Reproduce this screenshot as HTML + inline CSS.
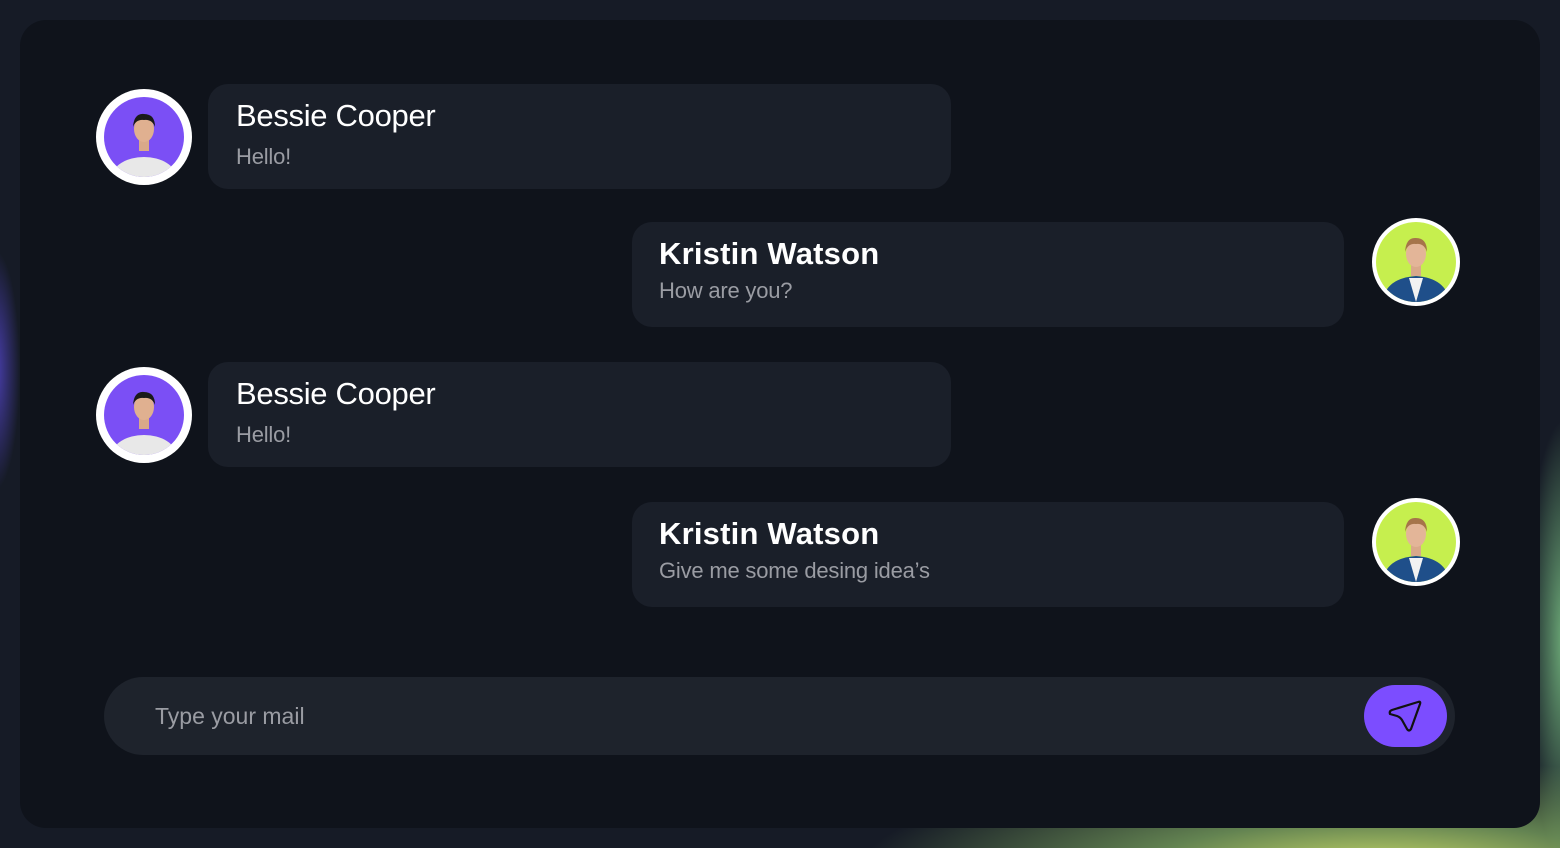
<!DOCTYPE html>
<html><head><style>
*{margin:0;padding:0;box-sizing:border-box}
body{width:1560px;height:848px;overflow:hidden;font-family:"Liberation Sans",sans-serif;position:relative;
background:radial-gradient(ellipse 520px 110px at 1380px 870px,#cbdc68 0%,rgba(150,200,110,.6) 45%,rgba(22,27,38,0) 100%),
radial-gradient(ellipse 40px 220px at 1565px 640px,#6fae7a,rgba(22,27,38,0)),
radial-gradient(ellipse 25px 120px at -5px 370px,#4a3fb0,rgba(22,27,38,0)),#161b26}
.card{position:absolute;left:20px;top:20px;width:1520px;height:808px;background:#0f131b;border-radius:26px}
.b{position:absolute;background:#1a1f29;border-radius:20px;height:105px}
.n{position:absolute;color:#fff;font-size:31px;top:14px;letter-spacing:-0.3px}
.s{position:absolute;color:#9a9ca3;font-size:22px;top:60px;letter-spacing:-0.2px}
</style></head><body>
<div class="card"></div>
<div class="b" style="left:208px;top:84px;width:743px"><div class="n" style="left:28px">Bessie Cooper</div><div class="s" style="left:28px">Hello!</div></div>
<div class="b" style="left:632px;top:222px;width:712px"><div class="n" style="left:27px;font-weight:bold;letter-spacing:0.2px">Kristin Watson</div><div class="s" style="left:27px;top:56px">How are you?</div></div>
<div class="b" style="left:208px;top:362px;width:743px"><div class="n" style="left:28px">Bessie Cooper</div><div class="s" style="left:28px">Hello!</div></div>
<div class="b" style="left:632px;top:502px;width:712px"><div class="n" style="left:27px;font-weight:bold;letter-spacing:0.2px">Kristin Watson</div><div class="s" style="left:27px;top:56px">Give me some desing idea’s</div></div>

<svg width="0" height="0" style="position:absolute">
<defs>
<g id="p1"><rect width="80" height="80" fill="#7b4ff5"/><ellipse cx="40" cy="80" rx="32" ry="20" fill="#e8e8e8"/><rect x="35" y="40" width="10" height="14" fill="#d9a98a"/><ellipse cx="40" cy="32" rx="10" ry="13" fill="#e0b090"/><path d="M29 30 Q30 16 40 17 Q51 17 51 30 Q48 22 40 23 Q32 22 29 30Z" fill="#1a1a1a"/></g>
<g id="p2"><rect width="80" height="80" fill="#c6ef4e"/><path d="M6 80 Q10 56 40 54 Q70 56 74 80Z" fill="#1f4f8a"/><path d="M33 56 L40 80 L47 56Z" fill="#f2f2f2"/><rect x="35" y="40" width="10" height="14" fill="#d9a98a"/><ellipse cx="40" cy="32" rx="10" ry="13" fill="#e3b598"/><path d="M29 30 Q30 15 40 16 Q51 16 51 30 Q48 21 40 22 Q32 21 29 30Z" fill="#a6744a"/></g>
</defs></svg>
<svg style="position:absolute;left:96px;top:89px" width="96" height="96"><circle cx="48" cy="48" r="48" fill="#fff"/><clipPath id="c1"><circle cx="48" cy="48" r="40"/></clipPath><g clip-path="url(#c1)"><use href="#p1" x="8" y="8"/></g></svg>
<svg style="position:absolute;left:96px;top:367px" width="96" height="96"><circle cx="48" cy="48" r="48" fill="#fff"/><clipPath id="c2"><circle cx="48" cy="48" r="40"/></clipPath><g clip-path="url(#c2)"><use href="#p1" x="8" y="8"/></g></svg>
<svg style="position:absolute;left:1372px;top:218px" width="88" height="88"><circle cx="44" cy="44" r="44" fill="#fff"/><clipPath id="c3"><circle cx="44" cy="44" r="40"/></clipPath><g clip-path="url(#c3)"><use href="#p2" x="4" y="4"/></g></svg>
<svg style="position:absolute;left:1372px;top:498px" width="88" height="88"><circle cx="44" cy="44" r="44" fill="#fff"/><clipPath id="c4"><circle cx="44" cy="44" r="40"/></clipPath><g clip-path="url(#c4)"><use href="#p2" x="4" y="4"/></g></svg>

<div style="position:absolute;left:104px;top:677px;width:1351px;height:78px;background:#1e232c;border-radius:39px"></div>
<div style="position:absolute;left:155px;top:703px;color:#9a9ca3;font-size:23px">Type your mail</div>
<div style="position:absolute;left:1364px;top:685px;width:83px;height:62px;background:#7c4dff;border-radius:31px"></div>
<svg style="position:absolute;left:1386px;top:696px" width="40" height="40" viewBox="0 0 40 40"><path d="M4 18 Q3 15 6 14 L32 6 Q35 5 34 8 L25 33 Q23 36 21 33 L16 24 Q14 21 11 20 Z" fill="none" stroke="#111" stroke-width="2.2" stroke-linejoin="round"/></svg>
</body></html>
